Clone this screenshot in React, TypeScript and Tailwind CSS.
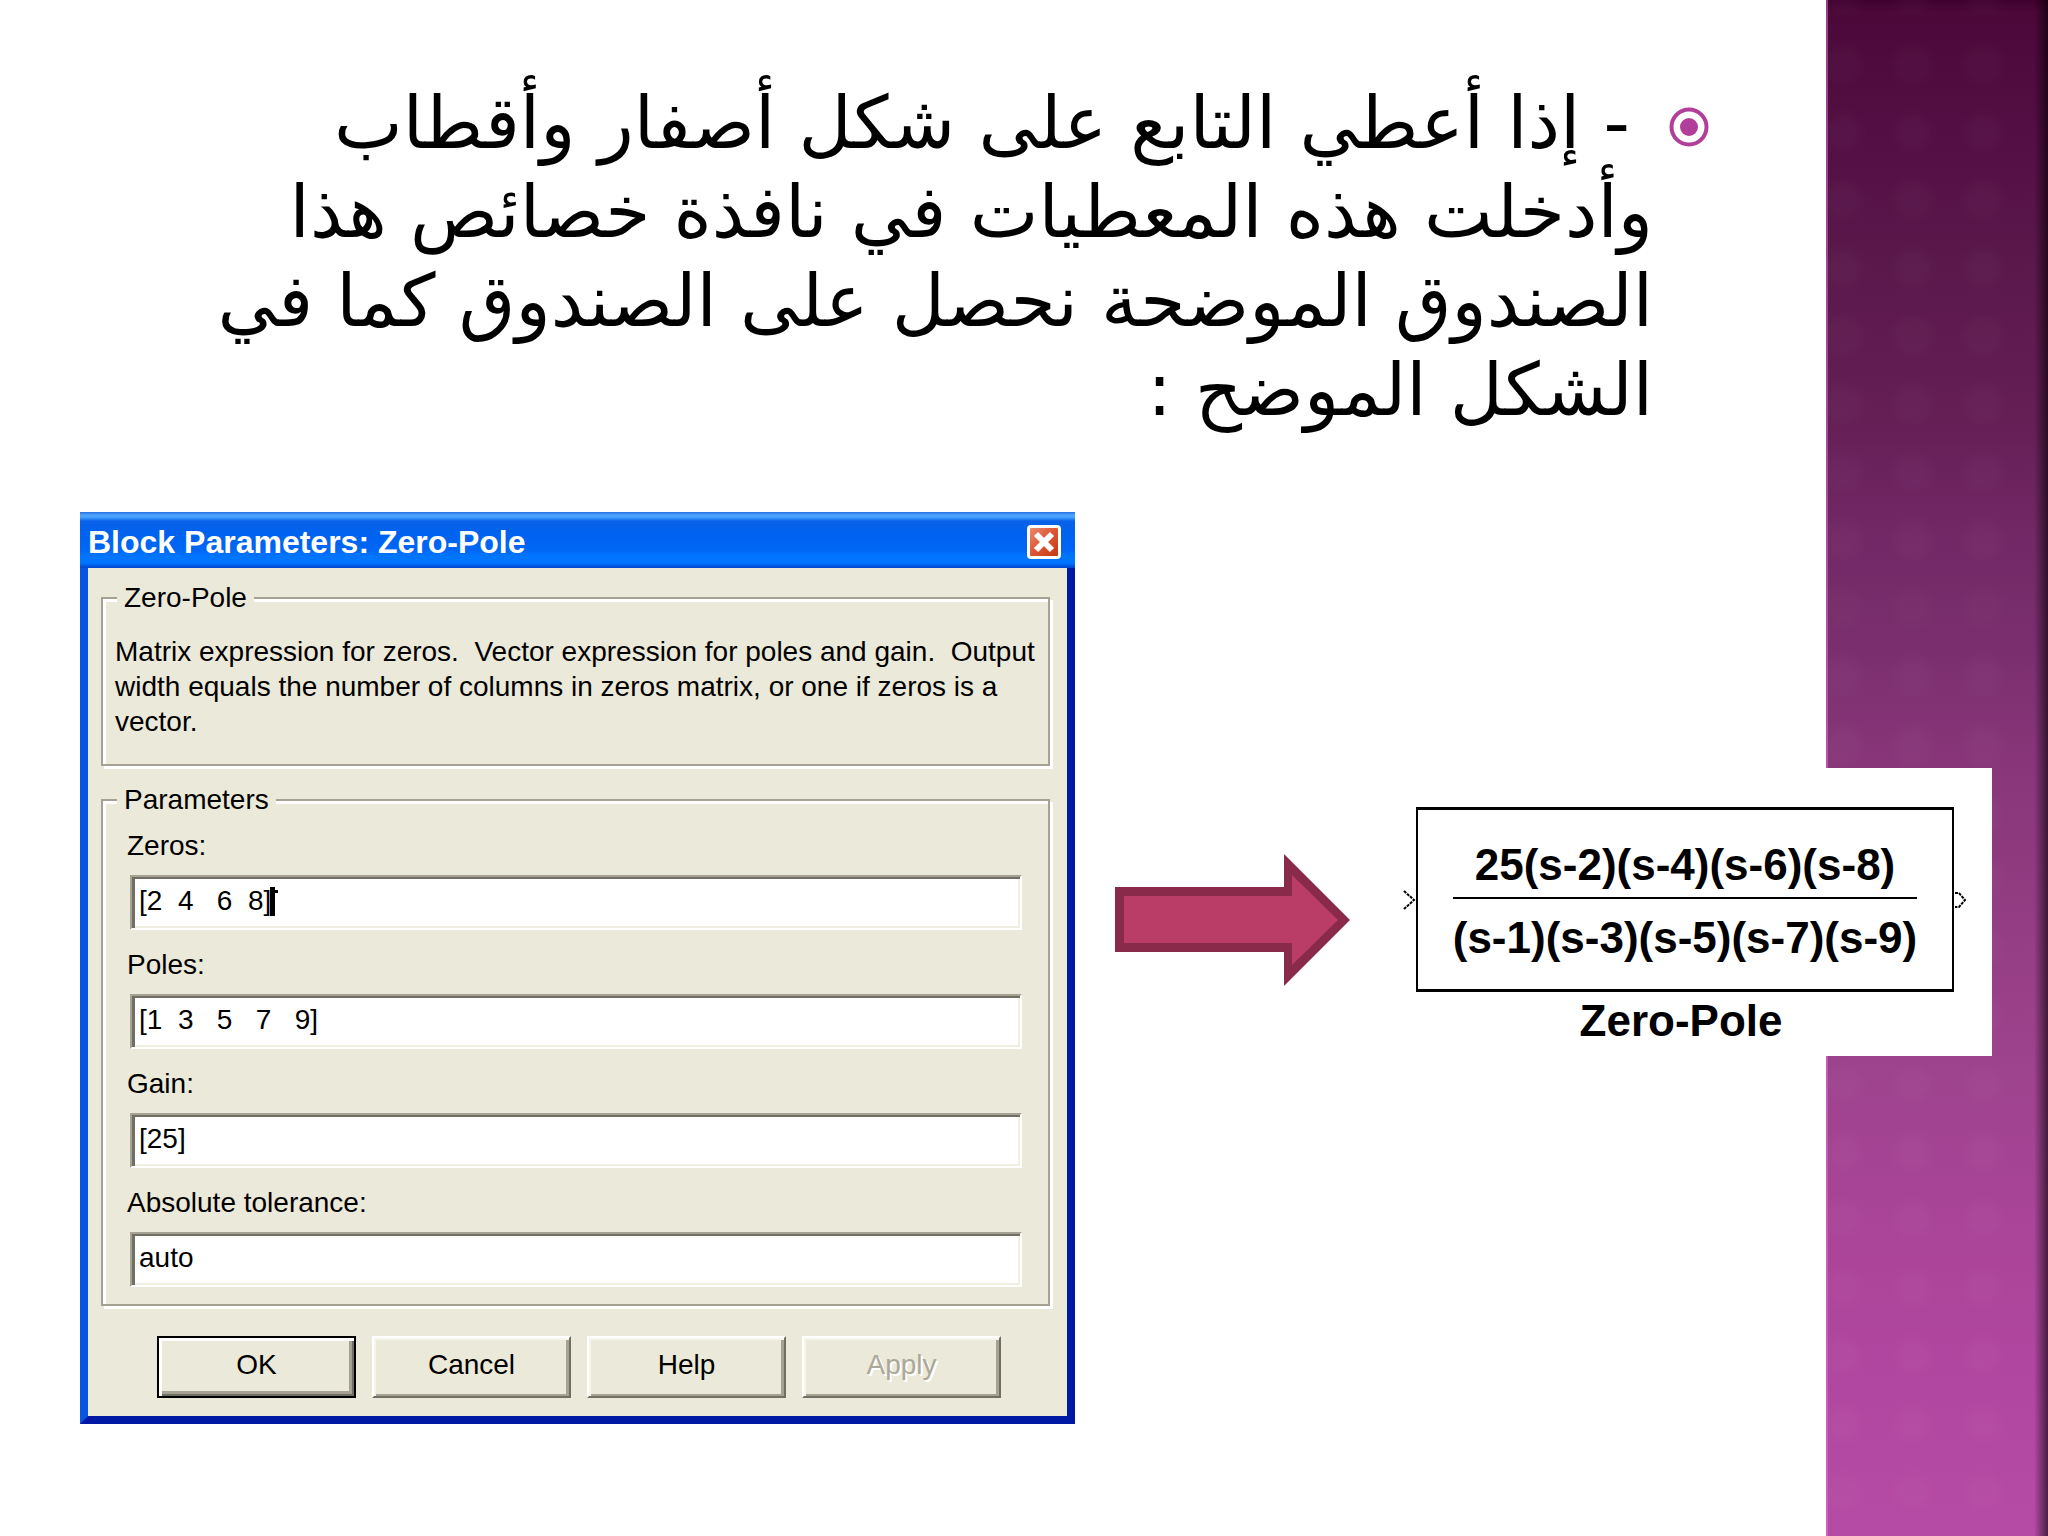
import type { ReactNode } from "react";

function GroupBox({ title, className, children }: { title: string; className: string; children: ReactNode }) {
  return (
    <fieldset
      className={`min-w-0 border-2 border-[#a5a294] shadow-[inset_3px_3px_0_#fff,3px_3px_0_#fff] ${className}`}
    >
      <legend className="relative ml-[14px] bg-[#ebe9d9] px-[7px] leading-[36px]">{title}</legend>
      {children}
    </fieldset>
  );
}

function Field({ id, label, value, caret = false }: { id: string; label: string; value: string; caret?: boolean }) {
  return (
    <div className="relative flex flex-col">
      <label htmlFor={id} className="h-[64px] pl-[24px] leading-[69px]">
        {label}
      </label>
      <input
        id={id}
        defaultValue={value}
        className="mr-[26px] ml-[27px] h-[55px] border-2 border-t-[#a5a294] border-r-white border-b-white border-l-[#a5a294] bg-white px-[7px] pb-[3px] whitespace-pre shadow-[inset_3px_2px_0_#716f64,inset_-2px_-2px_0_#f1efe2] outline-none"
      />
      {caret && (
        <svg className="absolute top-[76px] left-[167px] h-[29px] w-[8px]" viewBox="0 0 8 29" aria-hidden="true">
          <path d="M0 0H5V3H8V6H5V29H0z" fill="#000" />
        </svg>
      )}
    </div>
  );
}

const raised =
  "border-2 border-t-white border-l-white border-r-[#716f64] border-b-[#716f64] bg-[#ebe9d9] shadow-[inset_2px_2px_0_#f6f5ec,inset_-3px_-2px_0_#a5a294]";

function DialogButton({ children, kind = "normal" }: { children: string; kind?: "normal" | "default" | "disabled" }) {
  if (kind === "default") {
    return (
      <button className="h-[62px] flex-1 border-2 border-black bg-[#ebe9d9] pb-[4px] shadow-[inset_3px_3px_0_#fff,inset_-2px_-2px_0_#716f64,inset_-5px_-5px_0_#a5a294]">
        {children}
      </button>
    );
  }
  if (kind === "disabled") {
    return (
      <button disabled className={`h-[62px] flex-1 pb-[4px] text-[#aca899] [text-shadow:2px_2px_0_#fff] ${raised}`}>
        {children}
      </button>
    );
  }
  return <button className={`h-[62px] flex-1 pb-[4px] ${raised}`}>{children}</button>;
}

function ParametersDialog() {
  return (
    <section
      role="dialog"
      aria-labelledby="dialog-title"
      className="min-w-0 flex-1 border-[8px] border-t-0 border-r-[#0019a5] border-b-[#0019a5] border-l-[#0a55e0] bg-[#ebe9d9] font-['Liberation_Sans',Arial,sans-serif] text-[28px] text-black"
    >
      <header className="-mx-[8px] flex h-[56px] items-center justify-between bg-[linear-gradient(to_bottom,#2a6fe0_0px,#4ba3ff_3px,#4ba3ff_5px,#0a62e8_9px,#0062ee_20px,#0066f5_38px,#0075ff_44px,#0075ff_51px,#0044cc_56px)] pt-[4px] pr-[14px] pl-[8px]">
        <h2 id="dialog-title" className="text-[32px] leading-[52px] font-bold text-white">
          Block Parameters: Zero-Pole
        </h2>
        <button
          aria-label="Close"
          className="flex h-[34px] w-[34px] items-center justify-center rounded-[4px] border-[3px] border-white bg-linear-to-br from-[#e98a6c] via-[#dc5432] to-[#c43a12]"
        >
          <svg className="h-[22px] w-[22px]" viewBox="0 0 22 22" aria-hidden="true">
            <path d="M3 3L19 19M19 3L3 19" stroke="#fff" strokeWidth="6" />
          </svg>
        </button>
      </header>
      <div className="pt-[12px] pr-[17px] pb-[18px] pl-[13px]">
        <GroupBox title="Zero-Pole" className="h-[186px]">
          <p className="pt-[18px] pl-[12px] leading-[35px] whitespace-pre-wrap">
            {"Matrix expression for zeros.  Vector expression for poles and gain.  Output width equals the number of columns in zeros matrix, or one if zeros is a vector."}
          </p>
        </GroupBox>
        <GroupBox title="Parameters" className="mt-[16px] pb-[17px]">
          <div className="-mt-[7px]">
            <Field id="zeros" label="Zeros:" value="[2  4   6  8]" caret />
            <Field id="poles" label="Poles:" value="[1  3   5   7   9]" />
            <Field id="gain" label="Gain:" value="[25]" />
            <Field id="tolerance" label="Absolute tolerance:" value="auto" />
          </div>
        </GroupBox>
        <div className="mt-[30px] mr-[49px] ml-[56px] flex gap-4">
          <DialogButton kind="default">OK</DialogButton>
          <DialogButton>Cancel</DialogButton>
          <DialogButton>Help</DialogButton>
          <DialogButton kind="disabled">Apply</DialogButton>
        </div>
      </div>
    </section>
  );
}

function BlockFigure() {
  return (
    <figure className="relative z-10 mt-[256px] ml-[45px] h-[288px] w-[596px] shrink-0 bg-white pt-[39px] font-['Liberation_Sans',Arial,sans-serif] text-[44px] font-bold text-black">
      <div className="flex items-center">
        <svg className="ml-[6px] h-[22px] w-[14px] shrink-0" viewBox="0 0 14 22" aria-hidden="true">
          <path d="M2 2L12 11L2 20" fill="none" stroke="#000" strokeWidth="2" strokeDasharray="3 1" />
        </svg>
        <div className="flex h-[185px] flex-1 flex-col items-center justify-center border-x-2 border-y-[3px] border-black pt-[4px]">
          <div className="leading-[56px]">25(s-2)(s-4)(s-6)(s-8)</div>
          <div className="mt-[4px] border-t-2 border-black pt-[11px] leading-[56px]">(s-1)(s-3)(s-5)(s-7)(s-9)</div>
        </div>
        <svg className="mr-[24px] h-[22px] w-[14px] shrink-0" viewBox="0 0 14 22" aria-hidden="true">
          <path d="M1 4H5L11 11L5 18H1" fill="none" stroke="#000" strokeWidth="2" strokeDasharray="3 1" />
        </svg>
      </div>
      <figcaption className="pr-[26px] text-center leading-[58px]">Zero-Pole</figcaption>
    </figure>
  );
}

export default function App() {
  return (
    <div className="flex min-h-screen bg-white">
      <main className="min-w-0 flex-1">
        <ul dir="rtl" className="h-[512px] pt-[78px] pr-[117px] pl-[150px]">
          <li className="flex gap-4 font-['DejaVu_Sans',Tahoma,sans-serif] text-[73px] leading-[89px] text-black">
            <svg className="mt-[29px] h-[40px] w-[40px] shrink-0" viewBox="0 0 40 40" aria-hidden="true">
              <circle cx="20" cy="20" r="17.5" fill="none" stroke="#b13f9a" strokeWidth="4" />
              <circle cx="20" cy="20" r="9" fill="#b13f9a" />
            </svg>
            <p>
              {"\u00a0- إذا أعطي التابع على شكل أصفار وأقطاب وأدخلت هذه المعطيات في نافذة خصائص هذا الصندوق الموضحة نحصل على الصندوق كما في الشكل الموضح :"}
            </p>
          </li>
        </ul>
        <div className="-mr-[166px] flex items-start pl-20">
          <ParametersDialog />
          <svg className="mt-[342px] ml-[40px] h-[132px] w-[236px] shrink-0" viewBox="0 0 236 132" aria-hidden="true">
            <path d="M0 33H169V0L235 66L169 132V98H0z" fill="#892a4b" />
            <path d="M9 42H177V21L223 66L177 111V89H9z" fill="#b93d67" />
          </svg>
          <BlockFigure />
        </div>
      </main>
      <aside className="flex w-[222px] shrink-0 bg-[linear-gradient(to_bottom,#3f002f_0px,#4b0839_12px,#540f44_140px,#5a184b_260px,#651f55_420px,#722866_540px,#7c2f6f_660px,#883679_760px,#9c428c_1050px,#a84496_1200px,#b0469f_1350px,#b64ba5_1536px)]">
        <div className="w-[2px] bg-[#e07ad6]/50" />
        <div className="flex-1 bg-[radial-gradient(circle,rgba(255,255,255,0.02)_25%,transparent_50%)] bg-size-[70px_68px] bg-position-[50px_30px]" />
        <div className="w-[14px] bg-linear-to-r from-transparent to-black/60" />
      </aside>
    </div>
  );
}
